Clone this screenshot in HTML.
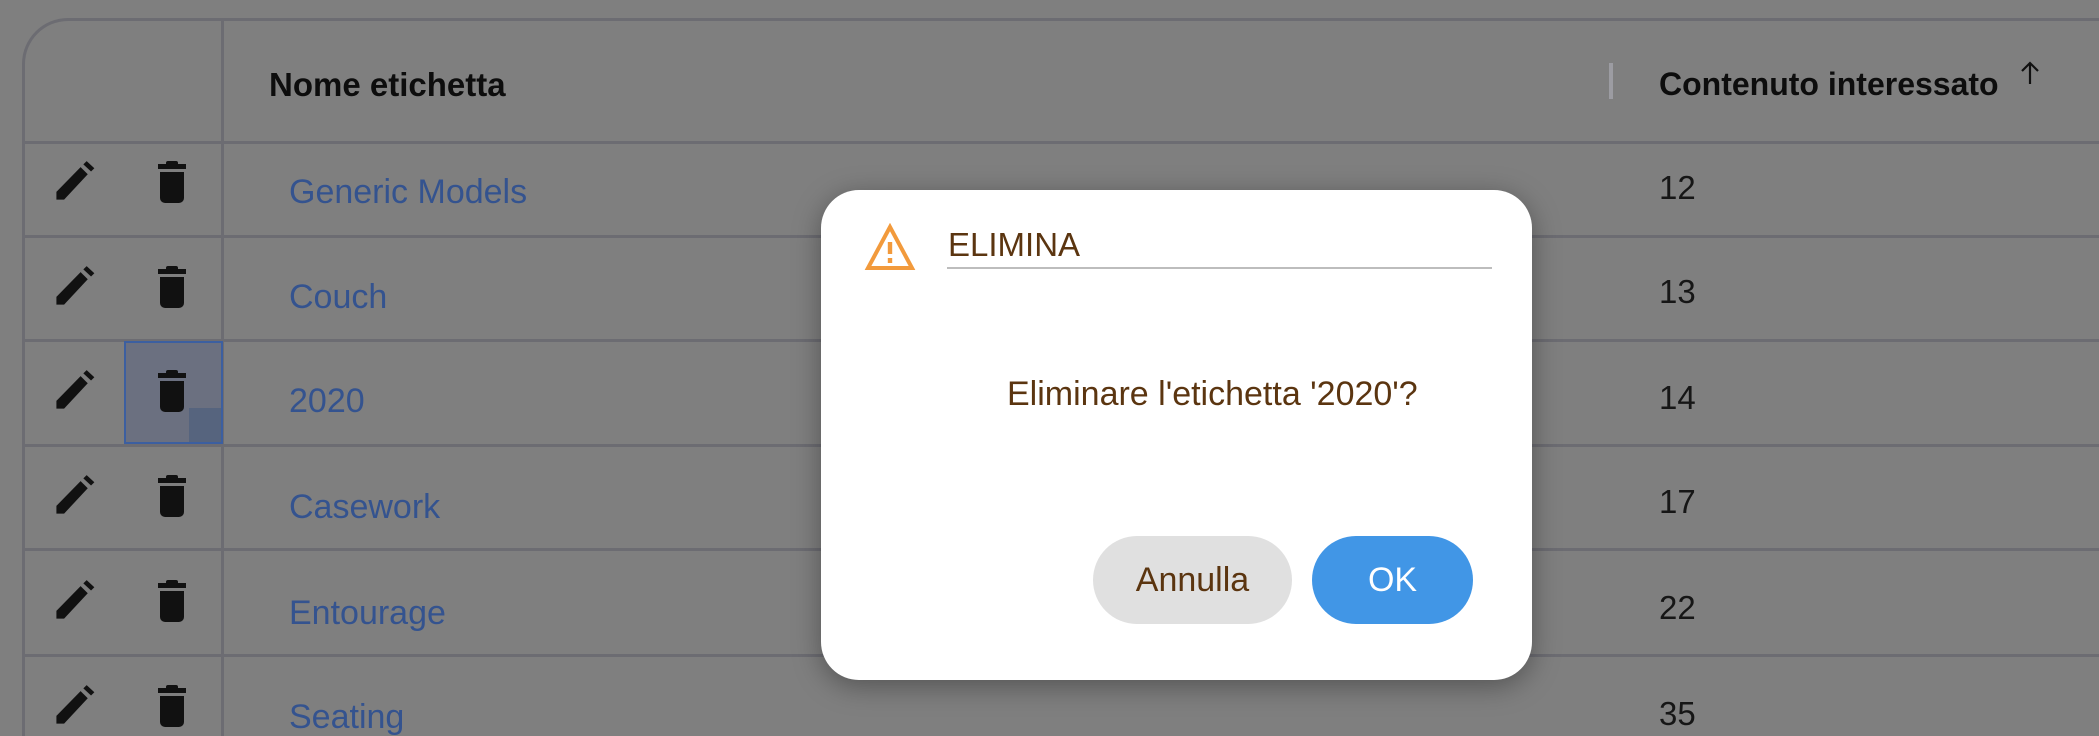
<!DOCTYPE html>
<html style="width:2099px;height:736px;overflow:hidden"><head><meta charset="utf-8"><style>
*{margin:0;padding:0;box-sizing:border-box}
body{width:2099px;height:736px;background:#7f7f7f;position:relative;overflow:hidden;font-family:"Liberation Sans",sans-serif}
.abs{position:absolute}
.hl{position:absolute;left:23px;width:2076px;height:3px;background:#6c6c72}
.vl{position:absolute;width:3px;background:#6c6c72}
.name{position:absolute;left:289px;font-size:34px;color:#34538f;line-height:1}
.num{position:absolute;left:1659px;font-size:33px;color:#161616;line-height:1}
.pen{position:absolute;left:52px;width:44px;height:44px}
.trash{position:absolute;left:155px;width:34px;height:44px}
.dlg{position:absolute;left:821px;top:190px;width:711px;height:490px;background:#fff;border-radius:38px;box-shadow:0 6px 28px rgba(0,0,0,.35)}
.brn{color:#5b3510}
</style></head><body>
<div class="abs" style="left:22px;top:18px;width:2077px;height:718px;border:3px solid #6c6c72;border-right:none;border-bottom:none;border-top-left-radius:46px"></div>
<div class="vl" style="left:221px;top:20px;height:716px"></div>
<div class="hl" style="top:141px"></div>
<div class="hl" style="top:235px"></div>
<div class="hl" style="top:339px"></div>
<div class="hl" style="top:444px"></div>
<div class="hl" style="top:548px"></div>
<div class="hl" style="top:654px"></div>
<div class="abs" style="left:269px;top:66px;font-size:33px;font-weight:bold;color:#0d0d0d">Nome etichetta</div>
<div class="abs" style="left:1609px;top:63px;width:4px;height:36px;background:#9c9ca2"></div>
<div class="abs" style="left:1659px;top:66px;font-size:32px;font-weight:bold;color:#0d0d0d">Contenuto interessato</div>
<svg class="abs" style="left:2019px;top:60px" width="22" height="26" viewBox="0 0 22 26"><path d="M11 24V3M3 11l8-8 8 8" stroke="#111" stroke-width="2.2" fill="none"/></svg>
<div class="abs" style="left:124px;top:341px;width:99px;height:103px;background:#6b7080;border:2px solid #3c5fa0"></div>
<div class="abs" style="left:189px;top:408px;width:32px;height:34px;background:#56647e"></div>

<div class="name" style="top:175px">Generic Models</div>
<div class="name" style="top:280px">Couch</div>
<div class="name" style="top:384px">2020</div>
<div class="name" style="top:490px">Casework</div>
<div class="name" style="top:596px">Entourage</div>
<div class="name" style="top:700px">Seating</div>

<div class="num" style="top:171px">12</div>
<div class="num" style="top:275px">13</div>
<div class="num" style="top:381px">14</div>
<div class="num" style="top:485px">17</div>
<div class="num" style="top:591px">22</div>
<div class="num" style="top:697px">35</div>

<svg width="0" height="0" style="position:absolute"><defs>
<symbol id="pen" viewBox="0 0 40 40"><path d="M4 36V29L26 6.5l6.5 6.5L11 36z" fill="#111"/><path d="M28.5 4l3-3 7 6.5-3 3z" fill="#111"/></symbol>
<symbol id="tr" viewBox="0 0 34 44"><rect x="3" y="4" width="28" height="5" fill="#111"/><rect x="11" y="1" width="12" height="4.5" rx="2" fill="#111"/><path d="M5 12h24v26a5 5 0 0 1-5 5H10a5 5 0 0 1-5-5z" fill="#111"/></symbol>
</defs></svg>
<svg class="pen" style="top:160px"><use href="#pen"/></svg>
<svg class="pen" style="top:265px"><use href="#pen"/></svg>
<svg class="pen" style="top:369px"><use href="#pen"/></svg>
<svg class="pen" style="top:474px"><use href="#pen"/></svg>
<svg class="pen" style="top:579px"><use href="#pen"/></svg>
<svg class="pen" style="top:684px"><use href="#pen"/></svg>
<svg class="trash" style="top:160px"><use href="#tr"/></svg>
<svg class="trash" style="top:265px"><use href="#tr"/></svg>
<svg class="trash" style="top:369px"><use href="#tr"/></svg>
<svg class="trash" style="top:474px"><use href="#tr"/></svg>
<svg class="trash" style="top:579px"><use href="#tr"/></svg>
<svg class="trash" style="top:684px"><use href="#tr"/></svg>

<div class="dlg">
  <svg class="abs" style="left:43px;top:33px" width="52" height="48" viewBox="0 0 52 48"><path d="M26 4L4 45h44z" fill="none" stroke="#f29a3c" stroke-width="4"/><rect x="23.8" y="19" width="4.4" height="12" fill="#f29a3c"/><rect x="23.8" y="35" width="4.4" height="5" fill="#f29a3c"/></svg>
  <div class="abs brn" style="left:127px;top:36px;font-size:33px">ELIMINA</div>
  <div class="abs" style="left:126px;top:77px;width:545px;height:2px;background:#bdbdbd"></div>
  <div class="abs brn" style="left:186px;top:185px;font-size:34px">Eliminare l'etichetta '2020'?</div>
  <div class="abs brn" style="left:272px;top:346px;width:199px;height:88px;border-radius:44px;background:#e0e0e0;font-size:34px;text-align:center;line-height:88px">Annulla</div>
  <div class="abs" style="left:491px;top:346px;width:161px;height:88px;border-radius:44px;background:#4196e6;color:#fff;font-size:34px;text-align:center;line-height:88px">OK</div>
</div>
</body></html>
